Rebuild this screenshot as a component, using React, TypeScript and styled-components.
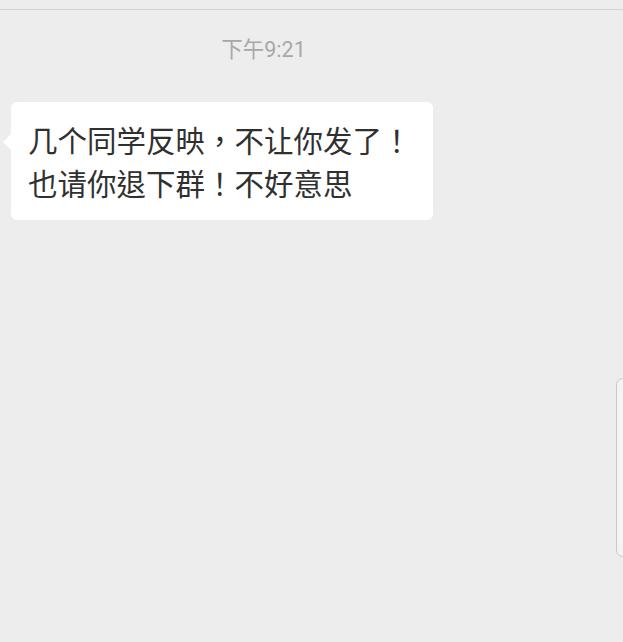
import React from "react";
import styled, { createGlobalStyle } from "styled-components";

const Global = createGlobalStyle`
  html, body { margin: 0; padding: 0; background: #ededed; }
  body { font-family: "Noto Sans CJK SC", "Noto Sans", sans-serif; }
  #root { width: 623px; height: 642px; overflow: hidden; position: relative; }
`;

const Screen = styled.div`
  width: 623px;
  height: 642px;
  background: #ededed;
  display: flex;
  flex-direction: column;
  position: relative;
`;

const TopBar = styled.div`
  height: 9px;
  border-bottom: 1px solid #d3d3d3;
  flex: none;
`;

const Time = styled.div`
  margin-top: 26px;
  text-align: center;
  font-family: Roboto, "Noto Sans CJK SC", sans-serif;
  font-size: 21.5px;
  line-height: 28px;
  color: #a8a8a8;
  padding-right: 96px;
`;

const Row = styled.div`
  margin-top: 38px;
  padding-left: 11px;
  display: flex;
`;

const Bubble = styled.div`
  position: relative;
  background: #ffffff;
  border-radius: 6px;
  padding: 16px 17px 16px 17px;
  width: 388px;
  font-family: "Noto Sans CJK TC", "Noto Sans CJK SC", sans-serif;
  font-size: 29.5px;
  line-height: 43px;
  color: #303030;
  &::before {
    content: "";
    position: absolute;
    left: -8px;
    top: 32px;
    width: 0;
    height: 0;
    border-top: 8px solid transparent;
    border-bottom: 8px solid transparent;
    border-right: 8px solid #ffffff;
  }
`;

const SidePanel = styled.div`
  position: absolute;
  left: 616px;
  top: 378px;
  width: 30px;
  height: 177px;
  background: #f4f4f4;
  border: 1px solid #c8c8c8;
  border-radius: 7px;
`;

export default function App() {
  return (
    <>
      <Global />
      <Screen>
        <TopBar />
        <Time>下午9:21</Time>
        <Row>
          <Bubble>
            几个同学反映，不让你发了！
            <br />
            也请你退下群！不好意思
          </Bubble>
        </Row>
        <SidePanel />
      </Screen>
    </>
  );
}
